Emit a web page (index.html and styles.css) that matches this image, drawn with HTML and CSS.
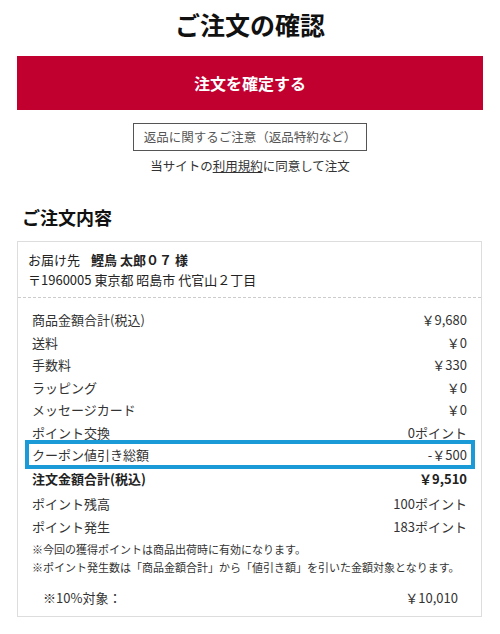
FILE: index.html
```html
<!DOCTYPE html>
<html lang="ja">
<head>
<meta charset="utf-8">
<title>ご注文の確認</title>
<link rel="stylesheet" href="styles.css">
</head>
<body>
<h1 class="page-title">ご注文の確認</h1>
<button class="confirm-btn" type="button">注文を確定する</button>
<div class="notice-wrap"><a class="notice" href="#">返品に関するご注意（返品特約など）</a></div>
<p class="agree">当サイトの<a href="#" class="terms">利用規約</a>に同意して注文</p>
<h2 class="section-title">ご注文内容</h2>
<section class="order-card">
  <div class="dest">
    <div class="dest-name"><span class="dest-label">お届け先</span><strong>鰹鳥 太郎０７ 様</strong></div>
    <div class="dest-addr">〒1960005 東京都 昭島市 代官山２丁目</div>
  </div>
  <div class="summary">
    <div class="row"><span>商品金額合計(税込)</span><span>￥9,680</span></div>
    <div class="row"><span>送料</span><span>￥0</span></div>
    <div class="row"><span>手数料</span><span>￥330</span></div>
    <div class="row"><span>ラッピング</span><span>￥0</span></div>
    <div class="row"><span>メッセージカード</span><span>￥0</span></div>
    <div class="row"><span>ポイント交換</span><span>0ポイント</span></div>
    <div class="row row-coupon"><span>クーポン値引き総額</span><span>-￥500</span></div>
    <div class="row row-total"><span>注文金額合計(税込)</span><span>￥9,510</span></div>
    <div class="row"><span>ポイント残高</span><span>100ポイント</span></div>
    <div class="row"><span>ポイント発生</span><span>183ポイント</span></div>
    <p class="note">※今回の獲得ポイントは商品出荷時に有効になります。<br>※ポイント発生数は「商品金額合計」から「値引き額」を引いた金額対象となります。</p>
    <div class="row row-tax"><span>※10%対象：</span><span>￥10,010</span></div>
  </div>
</section>
</body>
</html>
```
FILE: styles.css
```css
* { box-sizing: border-box; }

body {
  margin: 0;
  width: 500px;
  background: #fff;
  color: #333;
  font-family: "Noto Sans CJK JP", "Noto Sans", sans-serif;
}

.page-title {
  margin: 0;
  height: 56px;
  line-height: 48px;
  text-align: center;
  font-size: 25px;
  font-weight: 700;
  color: #111;
}

.confirm-btn {
  display: flex;
  align-items: center;
  justify-content: center;
  width: 466px;
  height: 54px;
  margin: 0 17px;
  padding: 0;
  border: 0;
  background: #c20030;
  color: #fff;
  font-family: inherit;
  font-size: 16px;
  font-weight: 700;
}

.notice-wrap {
  margin-top: 13px;
  text-align: center;
  height: 28px;
}

.notice {
  display: inline-block;
  height: 28px;
  padding: 0 10px;
  border: 1px solid #555;
  line-height: 26px;
  font-size: 12.5px;
  color: #555;
  text-decoration: none;
}

.agree {
  margin: 5px 0 0;
  line-height: 20px;
  text-align: center;
  font-size: 12.5px;
  color: #333;
}

.terms {
  color: #333;
  text-decoration: underline;
}

.section-title {
  margin: 28px 0 11px;
  padding-left: 22px;
  line-height: 26px;
  font-size: 18px;
  font-weight: 700;
  color: #111;
}

.order-card {
  margin: 0 18px 0 17px;
  border: 1px solid #ddd;
}

.dest {
  padding: 8px 10px 7px;
  border-bottom: 1px dashed #ccc;
  font-size: 13px;
  line-height: 20px;
  color: #222;
}

.dest-label { margin-right: 11px; }

.dest-name strong { font-weight: 700; }

.summary {
  padding: 11px 10px 7px;
}

.row {
  display: flex;
  justify-content: space-between;
  padding: 0 4px;
  height: 22.5px;
  line-height: 22.5px;
  font-size: 13px;
  color: #333;
}

.row-coupon {
  position: relative;
  height: 23.5px;
  border-bottom: 1px solid #e3e3e3;
}

/* highlight frame around the coupon discount */
.row-coupon::after {
  content: "";
  position: absolute;
  top: -4px;
  bottom: -2.5px;
  left: -3px;
  right: -4px;
  border: 4px solid #1a9ad6;
}

.row-total {
  margin-bottom: 3px;
  font-weight: 700;
  color: #222;
}

.note {
  margin: 2px 0 0;
  padding: 0 4px;
  font-size: 11px;
  line-height: 18px;
  color: #333;
}

.row-tax {
  margin-top: 11px;
  padding: 0 13px 0 15px;
  height: 22px;
  line-height: 22px;
}
```
